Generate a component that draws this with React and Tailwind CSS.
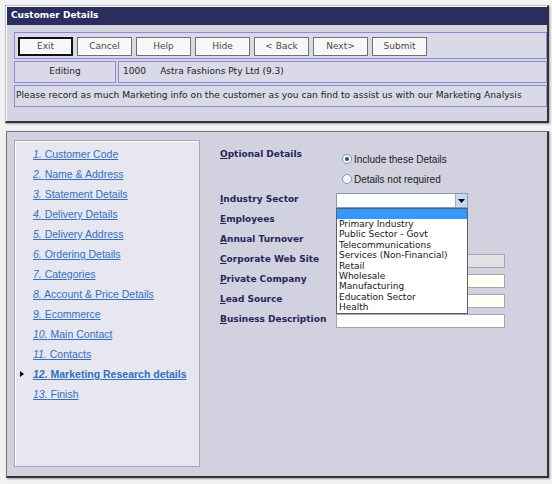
import React from "react";

const buttons = ["Exit", "Cancel", "Help", "Hide", "< Back", "Next>", "Submit"];

const steps = [
  ["1.", "Customer Code"],
  ["2.", "Name & Address"],
  ["3.", "Statement Details"],
  ["4.", "Delivery Details"],
  ["5.", "Delivery Address"],
  ["6.", "Ordering Details"],
  ["7.", "Categories"],
  ["8.", "Account & Price Details"],
  ["9.", "Ecommerce"],
  ["10.", "Main Contact"],
  ["11.", "Contacts"],
  ["12.", "Marketing Research details"],
  ["13.", "Finish"],
];

const sectors = [
  "Primary Industry",
  "Public Sector - Govt",
  "Telecommunications",
  "Services (Non-Financial)",
  "Retail",
  "Wholesale",
  "Manufacturing",
  "Education Sector",
  "Health",
];

function Label({ text }) {
  return (
    <div className="w-[116px] shrink-0 h-[20px] leading-[20px] text-[9px] font-bold text-[#26265e] whitespace-nowrap">
      <span className="underline">{text[0]}</span>
      {text.slice(1)}
    </div>
  );
}

function Radio({ checked, children }) {
  return (
    <div className="h-[20px] flex items-center pl-[6px] gap-[2px] font-['Liberation_Sans',sans-serif] text-[10px] text-[#1a1a1a]">
      <span className="w-[10px] h-[10px] rounded-full border border-[#8696b0] bg-[#f4f6fa] flex items-center justify-center">
        {checked && <span className="w-[4px] h-[4px] rounded-full bg-[#2d4d8c]" />}
      </span>
      {children}
    </div>
  );
}

function Row({ label, children, pad = "pt-[5px]" }) {
  return (
    <div className="flex h-[20px]">
      <Label text={label} />
      <div className={pad}>{children}</div>
    </div>
  );
}

export default function App() {
  return (
    <div className="w-[552px] h-[484px] overflow-hidden bg-[#f2f2f4] pt-[5px] pl-[5px] font-['DejaVu_Sans',sans-serif]">
      {/* top panel */}
      <div className="w-[544px] h-[118px] flex flex-col bg-white pl-px pt-px border-t border-l border-[#c2c2c6] border-r-2 border-b-2 border-r-[#333] border-b-[#333] shadow-[1px_1px_2px_rgba(0,0,0,0.35)]">
        <div className="h-[18px] shrink-0 bg-[#2b2d5f] text-white font-bold text-[9px] pl-[4px] flex items-center">
          Customer Details
        </div>
        <div className="flex-1 bg-[#d4d4e2] pt-[7px] pl-[7px]">
          <div className="h-[27px] border border-[#8c8cd4] bg-[#d9d9e8] flex items-start gap-[4px] pl-[3px] pt-[4px]">
            {buttons.map((b) => (
              <div
                key={b}
                className={
                  "w-[55px] h-[19px] flex items-center justify-center bg-[#f7f7f7] text-[9px] text-[#4a4a4a] shadow-[inset_0_0_0_1px_#fff] " +
                  (b === "Exit" ? "border-2 border-[#111]" : "border border-[#6e6e6e]")
                }
              >
                {b}
              </div>
            ))}
          </div>
          <div className="mt-[2px] h-[22px] flex gap-[2px] text-[9px] text-[#222]">
            <div className="w-[102px] border border-[#8c8cd4] bg-[#d9d9e8] flex items-center justify-center">
              Editing
            </div>
            <div className="flex-1 border border-[#8c8cd4] bg-[#d9d9e8] flex items-center pl-[4px] whitespace-pre">
              {"1000     Astra Fashions Pty Ltd (9.3)"}
            </div>
          </div>
          <div className="mt-[2px] h-[22px] border border-[#8c8cd4] bg-[#d9d9e8] flex items-center pl-[1px] text-[9.15px] text-[#222] whitespace-nowrap">
            Please record as much Marketing info on the customer as you can find to assist us with our Marketing Analysis
          </div>
        </div>
      </div>

      {/* bottom panel */}
      <div className="mt-[8px] ml-px w-[543px] h-[347px] flex bg-[#d1d1df] pt-[8px] pl-[7px] border border-[#767676] border-r-2 border-b-2 border-r-[#333] border-b-[#333] shadow-[1px_1px_2px_rgba(0,0,0,0.35)]">
        <div className="w-[186px] h-[327px] shrink-0 bg-[#e6e7f0] border border-[#a9a9b4] shadow-[inset_1px_1px_0_#fff] pt-[3px] pl-[18px] font-['Liberation_Sans',sans-serif] text-[10.5px] text-[#3470bd]">
          {steps.map(([n, t]) => {
            const active = n === "12.";
            return (
              <div key={n} className={"relative h-[20px] leading-[20px] whitespace-nowrap " + (active ? "font-bold" : "")}>
                {active && (
                  <span className="absolute left-[-13px] top-[7px] w-0 h-0 border-y-[3px] border-y-transparent border-l-[4px] border-l-black" />
                )}
                <span className="underline">
                  <i>{n}</i> {t}
                </span>
              </div>
            );
          })}
        </div>

        <div className="ml-[20px] pt-[4px]">
          <div className="flex h-[45px]">
            <Label text="Optional Details" />
            <div className="pt-[5px]">
              <Radio checked>Include these Details</Radio>
              <Radio>Details not required</Radio>
            </div>
          </div>

          <Row label="Industry Sector" pad="pt-[4px]">
            <div className="relative w-[132px] h-[15px] bg-white border border-[#8a9ab4] flex justify-end">
              <div className="w-[12px] h-full bg-[#c8d8f0] border-l border-[#9cb0d0] flex items-center justify-center">
                <svg width="7" height="4" viewBox="0 0 7 4">
                  <path d="M0 0h7L3.5 4z" fill="#000" />
                </svg>
              </div>
              <div className="absolute left-[-1px] top-[14px] w-[132px] h-[106px] bg-white border border-[#5e5e66] z-10 text-[9px] leading-[10.4px] text-[#151515]">
                <div className="h-[10px] bg-[#3399ff]" />
                {sectors.map((s) => (
                  <div key={s} className="pl-[2px] whitespace-nowrap">
                    {s}
                  </div>
                ))}
              </div>
            </div>
          </Row>
          <Row label="Employees">
            <div className="w-[80px] h-[14px] bg-white border border-[#a0a0a8]" />
          </Row>
          <Row label="Annual Turnover">
            <div className="w-[80px] h-[14px] bg-white border border-[#a0a0a8]" />
          </Row>
          <Row label="Corporate Web Site">
            <div className="w-[169px] h-[14px] bg-[#e2e2e6] border border-[#a4a4ac]" />
          </Row>
          <Row label="Private Company">
            <div className="w-[169px] h-[14px] bg-[#fffff4] border border-[#a4a4ac]" />
          </Row>
          <Row label="Lead Source">
            <div className="w-[169px] h-[14px] bg-[#fffff4] border border-[#a4a4ac]" />
          </Row>
          <Row label="Business Description">
            <div className="w-[169px] h-[14px] bg-white border border-[#a4a4ac]" />
          </Row>
        </div>
      </div>
    </div>
  );
}
